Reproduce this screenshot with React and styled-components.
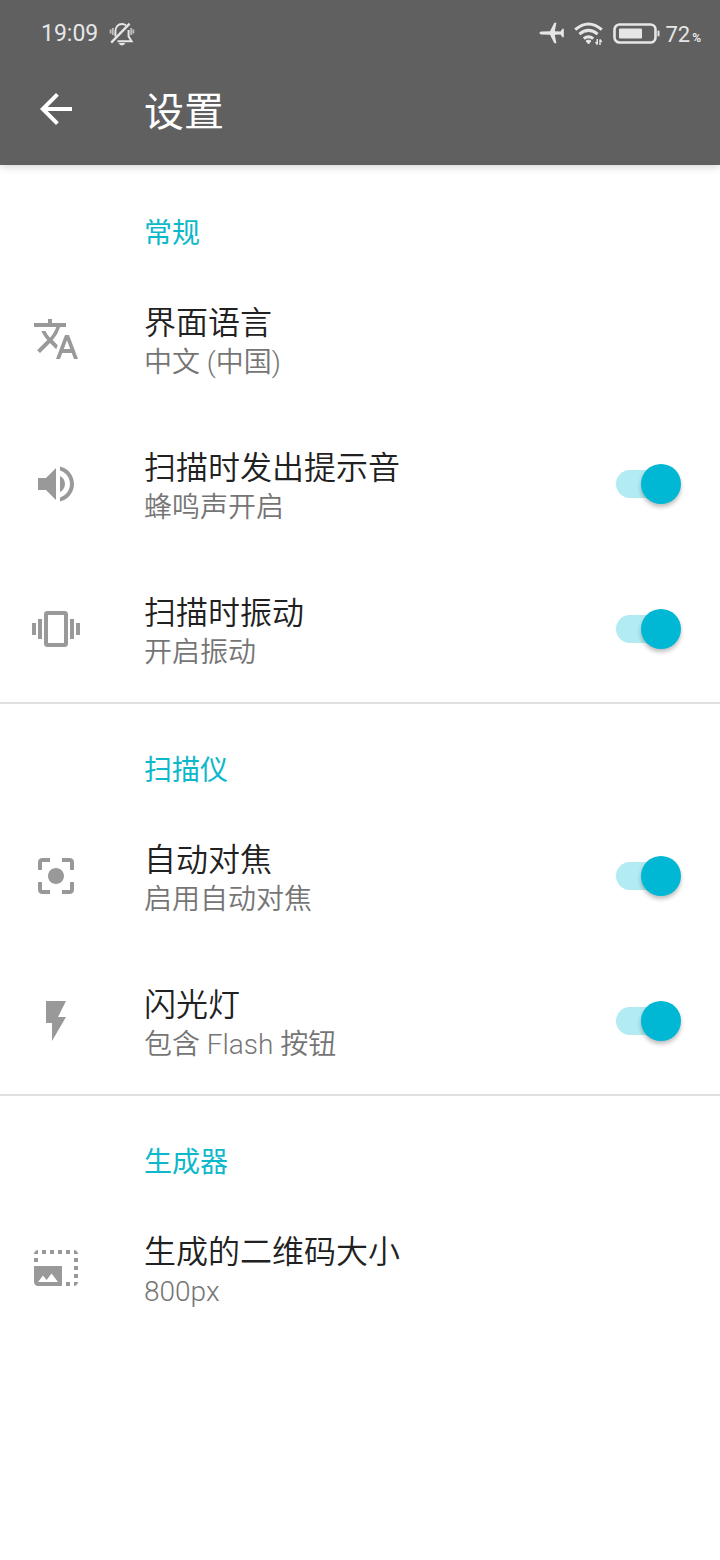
import React, { useState } from 'react';
import styled, { createGlobalStyle } from 'styled-components';
import {
    MdArrowBack,
    MdCenterFocusStrong,
    MdFlashOn,
    MdPhotoSizeSelectLarge,
    MdTranslate,
    MdVibration,
    MdVolumeUp
} from 'react-icons/md';

const GlobalStyle = createGlobalStyle`
    * {
        box-sizing: border-box;
    }

    body {
        margin: 0;
        background: #ffffff;
        font-family: Roboto, "Noto Sans CJK SC", sans-serif;
    }

    h1, h2, p {
        margin: 0;
    }
`

const Header = styled.header`
    background: #606060;
    color: #ffffff;
    box-shadow: 0 2px 8px rgba(0, 0, 0, 0.16);
`

const StatusBar = styled.div`
    display: flex;
    align-items: center;
    justify-content: space-between;
    height: 53px;
    padding: 15px 19px 0 41px;
    color: #e6e6e6;
    font-size: 23px;
    line-height: 38px;

    svg {
        display: block;
        flex: none;
    }
`

const StatusGroup = styled.div`
    display: flex;
    align-items: center;
    gap: ${props => props.$gap}px;
`

const Battery = styled.div`
    display: flex;
    align-items: center;
    gap: 4px;
`

const Level = styled.span`
    padding-top: 4px;
    font-size: 22px;
    line-height: 34px;
`

const Percent = styled.small`
    margin-left: 2px;
    font-size: 12px;
    font-weight: 700;
`

const Toolbar = styled.div`
    display: flex;
    align-items: center;
    height: 112px;
    padding: 0 32px;
`

const BackButton = styled.button`
    display: flex;
    width: 48px;
    height: 48px;
    margin-right: 64px;
    padding: 0;
    border: 0;
    background: none;
    color: inherit;
    font-size: 48px;
    cursor: pointer;
`

const Title = styled.h1`
    padding-top: 8px;
    font-size: 40px;
    font-weight: 400;
    line-height: 56px;
`

const Section = styled.section`
    border-top: 2px solid ${props => props.$divided ? '#e0e0e0' : 'transparent'};
`

const SectionTitle = styled.h2`
    padding: 47px 32px 13px 144px;
    color: #0cb8ca;
    font-size: 28px;
    font-weight: 400;
    line-height: 40px;
`

const Row = styled.label`
    display: flex;
    align-items: center;
    min-height: 145px;
    padding: 0 36px 2px 32px;
    cursor: pointer;
`

const RowIcon = styled.span`
    display: flex;
    margin-right: 64px;
    color: #999999;
    font-size: 48px;
`

const RowText = styled.span`
    display: flex;
    flex: 1;
    flex-direction: column;
    padding-top: 9px;
`

const RowTitle = styled.span`
    color: #212121;
    font-size: 32px;
    font-weight: 350;
    line-height: 40px;
`

const Summary = styled.span`
    color: #757575;
    font-size: 28px;
    font-weight: 350;
    line-height: 40px;
`

const Switch = styled.input`
    appearance: none;
    display: flex;
    align-items: center;
    width: 56px;
    height: 28px;
    margin: 0 12px 0 0;
    border-radius: 14px;
    background: ${props => props.checked ? '#b2ebf2' : '#b9b9b9'};
    cursor: pointer;

    &::before {
        content: "";
        flex: none;
        width: 40px;
        height: 40px;
        margin-left: ${props => props.checked ? '25px' : '-9px'};
        border-radius: 50%;
        background: ${props => props.checked ? '#00b8d4' : '#ececec'};
        box-shadow: 0 3px 4px rgba(0, 0, 0, 0.26);
    }
`

const BellOffIcon = () => (
    <svg width="26" height="26" viewBox="0 0 26 26" fill="none" stroke="currentColor" strokeWidth="2">
        <path d="M6.400 15.500V10.500C6.400 6 9 3 13 3C14.600 3 16 3.500 17 4.400M19.600 9V15.500L22.600 20.200H8.500" />
        <path d="M2.200 21.600L20.600 2.600" strokeWidth="2.300" />
        <path d="M9.600 22H16.400Q15.400 24.400 13 24.400Q10.600 24.400 9.600 22Z" fill="currentColor" stroke="none" />
        <path d="M3.800 7V14M1.600 8.500V12.500M22.200 7V14M24.400 8.500V12.500" strokeWidth="1.800" opacity="0.7" />
    </svg>
)

const PlaneIcon = () => (
    <svg width="26" height="24" viewBox="0 0 26 24" fill="currentColor">
        <path d="M2 9.600L11 9.200L15.300 0.800H17.400L15.800 9.200L21.500 9.600L23.400 6.800H24.800V15.200H23.400L21.500 12.400L15.800 12.800L17.400 21.200H15.300L11 12.800L2 12.400Q0.400 11.800 0.400 11Q0.400 10.200 2 9.600Z" />
    </svg>
)

const WifiIcon = () => (
    <svg width="30" height="26" viewBox="0 0 30 26" fill="none" stroke="currentColor" strokeWidth="3">
        <path d="M1.200 8.600Q14.500 -2.600 27.800 8.600M5.400 13.200Q14.500 5.600 23.600 13.200M9.800 17.600Q14.500 13.800 19.200 17.600" />
        <path d="M12 20Q14.500 18 17 20L14.500 23Z" fill="currentColor" stroke="currentColor" strokeWidth="1" strokeLinejoin="round" />
        <path d="M23.300 18V23.500M21.600 21L23.300 23.500M26 24V18.500M26 18.500L27.700 21" strokeWidth="1.400" />
    </svg>
)

const BatteryIcon = () => (
    <svg width="48" height="22" viewBox="0 0 48 22" fill="currentColor">
        <rect x="1.500" y="1.500" width="41" height="18" rx="5" fill="none" stroke="currentColor" strokeWidth="2.600" />
        <rect x="6" y="5.500" width="23" height="10" rx="1" />
        <rect x="44.500" y="7.500" width="2" height="6" rx="1" />
    </svg>
)

const sections = [
    {
        title: '常规',
        items: [
            { id: 'language', icon: MdTranslate, title: '界面语言', summary: '中文 (中国)' },
            { id: 'beep', icon: MdVolumeUp, title: '扫描时发出提示音', summary: '蜂鸣声开启', toggle: true },
            { id: 'vibrate', icon: MdVibration, title: '扫描时振动', summary: '开启振动', toggle: true }
        ]
    },
    {
        title: '扫描仪',
        items: [
            { id: 'focus', icon: MdCenterFocusStrong, title: '自动对焦', summary: '启用自动对焦', toggle: true },
            { id: 'flash', icon: MdFlashOn, title: '闪光灯', summary: '包含 Flash 按钮', toggle: true }
        ]
    },
    {
        title: '生成器',
        items: [
            { id: 'size', icon: MdPhotoSizeSelectLarge, title: '生成的二维码大小', summary: '800px' }
        ]
    }
]

const Setting = ({ item, checked, onToggle }) => {
    const Icon = item.icon

    return (
        <Row as={item.toggle ? 'label' : 'div'} htmlFor={item.toggle ? item.id : undefined}>
            <RowIcon><Icon /></RowIcon>
            <RowText>
                <RowTitle>{item.title}</RowTitle>
                <Summary>{item.summary}</Summary>
            </RowText>
            {item.toggle &&
                <Switch
                    id={item.id}
                    type="checkbox"
                    role="switch"
                    checked={checked}
                    onChange={onToggle} />
            }
        </Row>
    )
}

const App = () => {

    const [values, setValues] = useState({
        beep: true,
        vibrate: true,
        focus: true,
        flash: true
    })

    const handleToggle = (id) => {
        setValues({ ...values, [id]: !values[id] })
    }

    return (
        <>
            <GlobalStyle />
            <Header>
                <StatusBar>
                    <StatusGroup $gap={11}>
                        <span>19:09</span>
                        <BellOffIcon />
                    </StatusGroup>
                    <StatusGroup $gap={9}>
                        <PlaneIcon />
                        <WifiIcon />
                        <Battery>
                            <BatteryIcon />
                            <Level>72<Percent>%</Percent></Level>
                        </Battery>
                    </StatusGroup>
                </StatusBar>
                <Toolbar>
                    <BackButton type="button" aria-label="返回"><MdArrowBack /></BackButton>
                    <Title>设置</Title>
                </Toolbar>
            </Header>
            <main>
                {sections.map((section, index) => (
                    <Section key={section.title} $divided={index > 0}>
                        <SectionTitle>{section.title}</SectionTitle>
                        {section.items.map(item => (
                            <Setting
                                key={item.id}
                                item={item}
                                checked={values[item.id]}
                                onToggle={() => handleToggle(item.id)} />
                        ))}
                    </Section>
                ))}
            </main>
        </>
    )
}

export default App
